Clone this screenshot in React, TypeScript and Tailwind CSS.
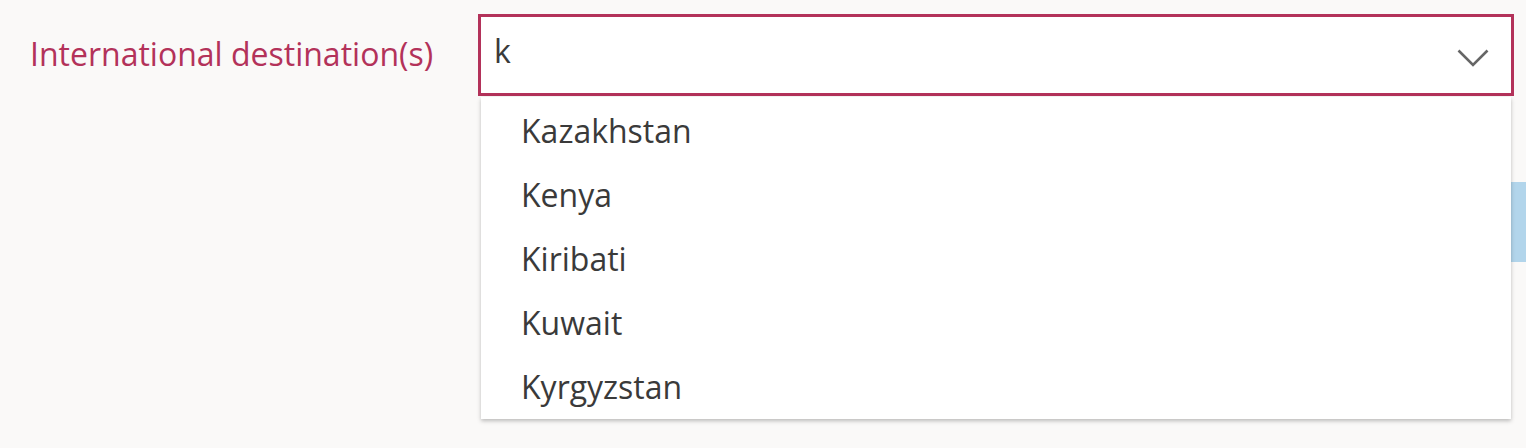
const countries = ["Kazakhstan", "Kenya", "Kiribati", "Kuwait", "Kyrgyzstan"];

export default function App() {
  return (
    <div className="min-h-[448px] overflow-hidden bg-[#faf9f8] font-['Open_Sans',sans-serif]">
      <div className="flex items-start pt-[14px] pl-[30px] pr-[12px]">
        <label className="w-[448px] shrink-0 pt-[18px] text-[32px] leading-[44px] text-[#b3325a]">
          International destination(s)
        </label>
        <div className="relative flex-1">
          <div className="flex h-[82px] items-start justify-between border-[3px] border-[#b3325a] bg-white pl-[13px] pr-[22px] pt-[12px]">
            <span className="text-[32px] leading-[44px] text-[#3a3a3a]">k</span>
            <svg
              className="mt-[20px]"
              width="32"
              height="18"
              viewBox="0 0 32 18"
              fill="none"
            >
              <polyline
                points="1.5,1.5 16,16 30.5,1.5"
                stroke="#666666"
                strokeWidth="2.6"
              />
            </svg>
          </div>
          <ul className="absolute left-[3px] right-[3px] top-[83px] z-10 bg-white pt-[2px] shadow-[0_2px_4px_rgba(0,0,0,0.25)]">
            {countries.map((c) => (
              <li
                key={c}
                className="pl-[40px] text-[32px] leading-[64px] text-[#3a3a3a]"
              >
                {c}
              </li>
            ))}
          </ul>
        </div>
      </div>
      <div className="mt-[86px] flex justify-end">
        <div className="h-[80px] w-[240px] bg-[#b2d5eb]" />
      </div>
    </div>
  );
}
